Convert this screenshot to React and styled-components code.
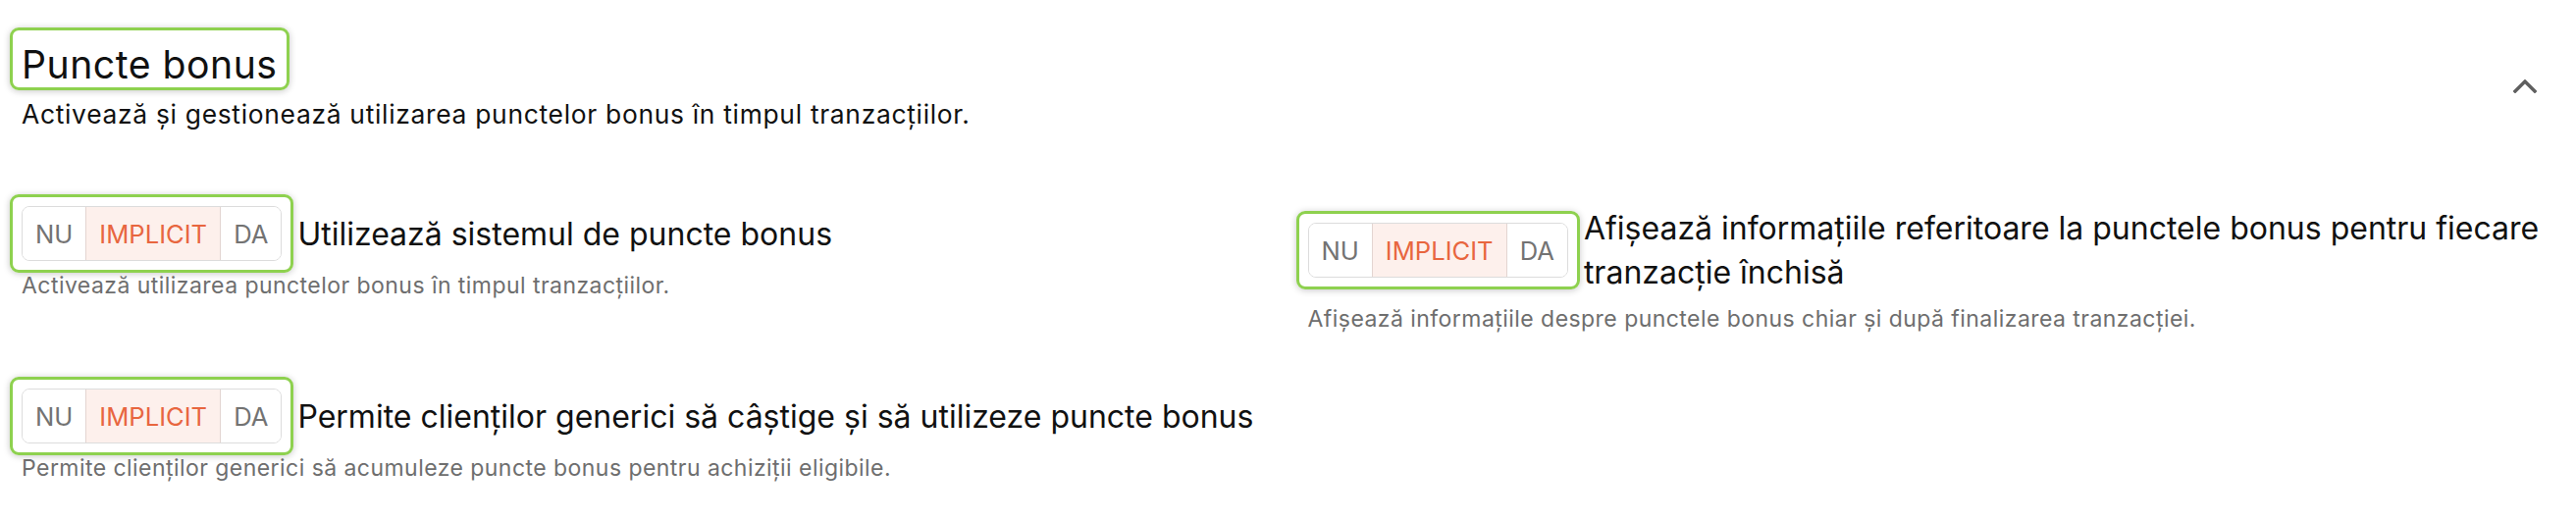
import styled, { createGlobalStyle } from 'styled-components';

const GlobalStyle = createGlobalStyle`
  body {
    margin: 0;
    background: #fff;
    color: #111;
    font-family: Inter, "Noto Sans", sans-serif;
  }
`;

const options = ['NU', 'IMPLICIT', 'DA'];

const settings = [
  {
    id: 'use',
    label: 'Utilizează sistemul de puncte bonus',
    hint: 'Activează utilizarea punctelor bonus în timpul tranzacțiilor.',
  },
  {
    id: 'show',
    label: 'Afișează informațiile referitoare la punctele bonus pentru fiecare tranzacție închisă',
    hint: 'Afișează informațiile despre punctele bonus chiar și după finalizarea tranzacției.',
  },
  {
    id: 'generic',
    label: 'Permite clienților generici să câștige și să utilizeze puncte bonus',
    hint: 'Permite clienților generici să acumuleze puncte bonus pentru achiziții eligibile.',
  },
];

const TriToggle = ({ value }) => (
  <Toggle>
    {options.map((opt, i) => (
      <Segment key={opt} $active={opt === value} $first={i === 0}>
        {opt}
      </Segment>
    ))}
  </Toggle>
);

const BonusSettings = () => {
  return (
    <Section>
      <GlobalStyle />
      <Header>
        <div>
          <Focus $pad="12px 9px 0 9px" $offset="-15px -12px -3px -12px">
            <Title>Puncte bonus</Title>
          </Focus>
          <Subtitle>Activează și gestionează utilizarea punctelor bonus în timpul tranzacțiilor.</Subtitle>
        </div>
        <Collapse aria-label="Restrânge">
          <svg width="24" height="14" viewBox="0 0 24 14" fill="none">
            <polyline
              points="2,12 12,2 22,12"
              stroke="#5f5f5f"
              strokeWidth="3.4"
              strokeLinecap="square"
            />
          </svg>
        </Collapse>
      </Header>

      <Grid>
        {settings.map((s) => (
          <Setting key={s.id}>
            <SettingRow>
              <Focus $pad="9px" $offset="-12px">
                <TriToggle value="IMPLICIT" />
              </Focus>
              <Label>{s.label}</Label>
            </SettingRow>
            <Hint>{s.hint}</Hint>
          </Setting>
        ))}
      </Grid>
    </Section>
  );
};

const Section = styled.section`
  padding: 43px 22px 30px 22px;
`;

const Header = styled.div`
  display: flex;
  align-items: center;
  justify-content: space-between;
`;

const Focus = styled.div`
  display: inline-flex;
  flex-shrink: 0;
  padding: ${(p) => p.$pad};
  margin: ${(p) => p.$offset};
  border: 3px solid #8ed14f;
  border-radius: 9px;
  box-shadow: 0 1px 7px rgba(0, 0, 0, 0.22);
`;

const Title = styled.h2`
  margin: 0;
  font-size: 39.2px;
  font-weight: 400;
  line-height: 46px;
  letter-spacing: 0.5px;
  color: #111;
`;

const Subtitle = styled.p`
  margin: 12px 0 0;
  font-size: 26.4px;
  line-height: 31px;
  letter-spacing: 0.7px;
  color: #111;
`;

const Collapse = styled.button`
  display: flex;
  align-items: center;
  justify-content: center;
  margin-right: 18px;
  padding: 0;
  border: none;
  background: none;
  cursor: pointer;
`;

const Grid = styled.div`
  display: grid;
  grid-template-columns: 1fr 1fr;
  column-gap: 40px;
  row-gap: 57px;
  align-items: start;
  margin-top: 78px;
`;

const Setting = styled.div`
  display: flex;
  flex-direction: column;
`;

const SettingRow = styled.div`
  display: flex;
  align-items: center;
  gap: 16px;
`;

const Label = styled.span`
  font-size: 32px;
  line-height: 45px;
  color: #111;
`;

const Hint = styled.p`
  margin: 12px 0 0;
  font-size: 23px;
  line-height: 27px;
  letter-spacing: 0.45px;
  color: #6e6e6e;
`;

const Toggle = styled.div`
  display: flex;
  height: 56px;
  box-sizing: border-box;
  border: 1px solid #dcdcdc;
  border-radius: 8px;
  overflow: hidden;
  background: #fff;
`;

const Segment = styled.span`
  display: flex;
  align-items: center;
  padding: 0 13px;
  font-size: 25.6px;
  color: ${(p) => (p.$active ? '#e8663f' : '#737373')};
  background: ${(p) => (p.$active ? '#fdf0ec' : '#fff')};
  border-left: ${(p) => (p.$first ? 'none' : '1px solid #e3d5d1')};
`;

export default BonusSettings;
